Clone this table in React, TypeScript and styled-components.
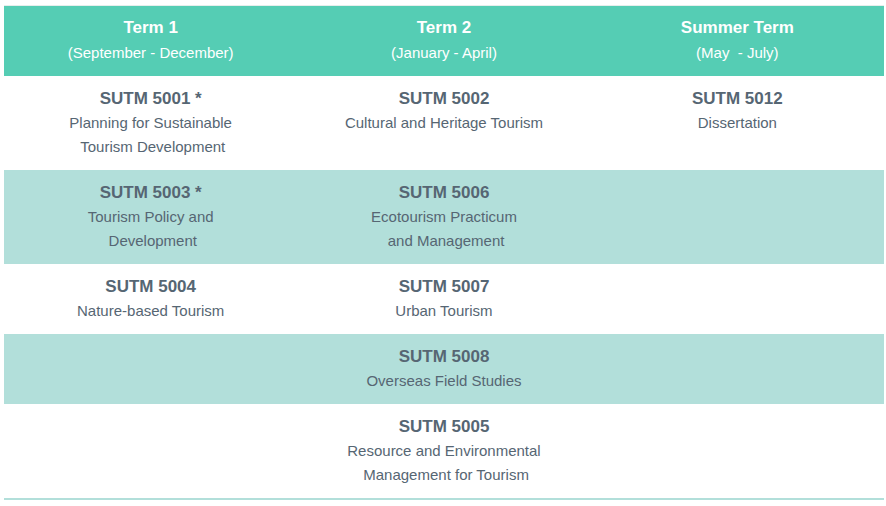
import React from "react";
import styled, { createGlobalStyle } from "styled-components";

type Course = { code: string; lines: string[] };

const terms = [
  { title: "Term 1", range: "(September - December)" },
  { title: "Term 2", range: "(January - April)" },
  { title: "Summer Term", range: "(May \u00a0- July)" },
];

const rows: (Course | null)[][] = [
  [
    { code: "SUTM 5001 *", lines: ["Planning for Sustainable", "\u00a0Tourism Development"] },
    { code: "SUTM 5002", lines: ["Cultural and Heritage Tourism"] },
    { code: "SUTM 5012", lines: ["Dissertation"] },
  ],
  [
    { code: "SUTM 5003 *", lines: ["Tourism Policy and", "\u00a0Development"] },
    { code: "SUTM 5006", lines: ["Ecotourism Practicum", "\u00a0and Management"] },
    null,
  ],
  [
    { code: "SUTM 5004", lines: ["Nature-based Tourism"] },
    { code: "SUTM 5007", lines: ["Urban Tourism"] },
    null,
  ],
  [null, { code: "SUTM 5008", lines: ["Overseas Field Studies"] }, null],
  [
    null,
    { code: "SUTM 5005", lines: ["Resource and Environmental", "\u00a0Management for Tourism"] },
    null,
  ],
];

function App() {
  return (
    <>
      <Global />
      <S.Page>
        <S.Table>
          <thead>
            <tr>
              {terms.map((t) => (
                <S.Head key={t.title}>
                  <S.HeadTitle>{t.title}</S.HeadTitle>
                  <S.HeadRange>{t.range}</S.HeadRange>
                </S.Head>
              ))}
            </tr>
          </thead>
          <tbody>
            {rows.map((row, i) => (
              <S.Row key={i} $shaded={i % 2 === 1}>
                {row.map((c, j) => (
                  <S.Cell key={j}>
                    {c && (
                      <>
                        <S.Code>{c.code}</S.Code>
                        {c.lines.map((l) => (
                          <S.Name key={l}>{l}</S.Name>
                        ))}
                      </>
                    )}
                  </S.Cell>
                ))}
              </S.Row>
            ))}
          </tbody>
        </S.Table>
      </S.Page>
    </>
  );
}

const Global = createGlobalStyle`
  body {
    margin: 0;
    background: #ffffff;
    font-family: "Liberation Sans", Arial, sans-serif;
  }
`;

//@styled
const S = {
  Page: styled.div`
    padding: 5px 2px 0 4px;
  `,
  Table: styled.table`
    width: 880px;
    border-collapse: collapse;
    table-layout: fixed;
    border-top: 1px solid #e6eeec;
    border-bottom: 2px solid #b2dfda;
  `,
  Head: styled.th`
    background-color: #55cdb4;
    color: #ffffff;
    text-align: center;
    padding: 10px 0 11px;
    vertical-align: top;
  `,
  HeadTitle: styled.div`
    font-size: 17px;
    font-weight: 700;
    line-height: 24px;
  `,
  HeadRange: styled.div`
    font-size: 15px;
    font-weight: 400;
    line-height: 25px;
  `,
  Row: styled.tr<{ $shaded: boolean }>`
    background-color: ${({ $shaded }) => ($shaded ? "#b2dfda" : "#ffffff")};
  `,
  Cell: styled.td`
    text-align: center;
    vertical-align: top;
    padding: 11px 0;
    color: #566673;
  `,
  Code: styled.div`
    font-size: 17px;
    font-weight: 700;
    line-height: 24px;
  `,
  Name: styled.div`
    font-size: 15px;
    line-height: 24px;
    white-space: pre;
  `,
};

export default App;
